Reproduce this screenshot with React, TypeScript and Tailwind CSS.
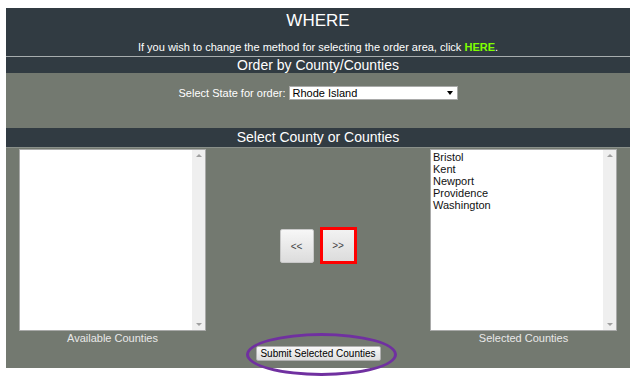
import React from "react";

const font = { fontFamily: "'Liberation Sans', Arial, sans-serif" };

function ListBox({ items }: { items: string[] }) {
  return (
    <div className="flex h-[182px] w-[187px] border border-[#a9aaa9] bg-white">
      <div className="flex-1 pl-[2px] pt-[1px] text-[11px] leading-[12px] text-[#111]">
        {items.map((i) => (
          <div key={i}>{i}</div>
        ))}
      </div>
      <div className="flex w-[13px] flex-col items-center justify-between bg-[#efefef] py-[4px]">
        <span className="h-0 w-0 border-x-[3px] border-b-[3px] border-x-transparent border-b-[#a0a0a0]" />
        <span className="h-0 w-0 border-x-[3px] border-t-[3px] border-x-transparent border-t-[#a0a0a0]" />
      </div>
    </div>
  );
}

export default function App() {
  return (
    <div className="h-[380px] w-[636px] bg-white pl-[6px] pt-[8px]" style={font}>
      <div className="relative flex h-[360px] w-[624px] flex-col">
        <div className="flex h-[48px] flex-col items-center bg-[#313b42] text-white">
          <div className="mt-[3px] text-[17px] leading-[20px]">WHERE</div>
          <div className="mt-[10px] whitespace-nowrap text-[11px] leading-[12px]">
            If you wish to change the method for selecting the order area, click{" "}
            <span className="font-bold text-[#7fff00]">HERE</span>.
          </div>
        </div>
        <div className="h-[1px] bg-[#a7adae]" />
        <div className="flex h-[16px] items-center justify-center bg-[#313b42] text-[14px] leading-[16px] text-white">
          Order by County/Counties
        </div>
        <div className="flex h-[55px] justify-center bg-[#737970] pt-[13px]">
          <div className="flex h-[14px] items-center gap-[3px] text-[11px] text-white">
            <span className="whitespace-nowrap">Select State for order:</span>
            <div className="flex h-[14px] w-[169px] items-center justify-between border border-[#a9aaa9] bg-white pl-[3px] pr-[4px] text-[11px] text-black">
              <span>Rhode Island</span>
              <span className="h-0 w-0 border-x-[3px] border-t-[4px] border-x-transparent border-t-black" />
            </div>
          </div>
        </div>
        <div className="flex h-[19px] items-center justify-center bg-[#313b42] text-[14px] text-white">
          Select County or Counties
        </div>
        <div className="h-[1px] bg-[#8a908a]" />
        <div className="flex flex-1 flex-col bg-[#737970]">
          <div className="flex justify-between px-[13px] pt-[1px]">
            <div className="flex flex-col items-center">
              <ListBox items={[]} />
              <div className="mt-[1px] text-[11px] leading-[13px] text-[#e8e8e8]">Available Counties</div>
            </div>
            <div className="flex items-start gap-[6px] pt-[78px]">
              <button className="mt-[2px] flex h-[34px] w-[34px] items-center justify-center rounded-[2px] border border-[#c8c8c8] bg-gradient-to-b from-[#f7f7f7] to-[#dcdcdc] text-[10px] text-[#444]">
                &lt;&lt;
              </button>
              <button className="flex h-[37px] w-[37px] items-center justify-center border-[3px] border-[#ff0000] bg-gradient-to-b from-[#f2f2f2] to-[#dcdcdc] text-[10px] text-[#444]">
                &gt;&gt;
              </button>
            </div>
            <div className="flex flex-col items-center">
              <ListBox items={["Bristol", "Kent", "Newport", "Providence", "Washington"]} />
              <div className="mt-[1px] text-[11px] leading-[13px] text-[#e8e8e8]">Selected Counties</div>
            </div>
          </div>
          <div className="flex justify-center pt-[1px]">
            <div className="relative">
              <button className="flex h-[15px] w-[125px] items-center justify-center whitespace-nowrap rounded-[2px] border border-[#b0b0b0] bg-gradient-to-b from-[#f8f8f8] to-[#dedede] text-[10px] text-black">
                Submit Selected Counties
              </button>
              <div className="pointer-events-none absolute left-[-10px] top-[-13px] h-[43px] w-[151px] rounded-[50%] border-[3px] border-[#7030a0]" />
            </div>
          </div>
        </div>
      </div>
    </div>
  );
}
